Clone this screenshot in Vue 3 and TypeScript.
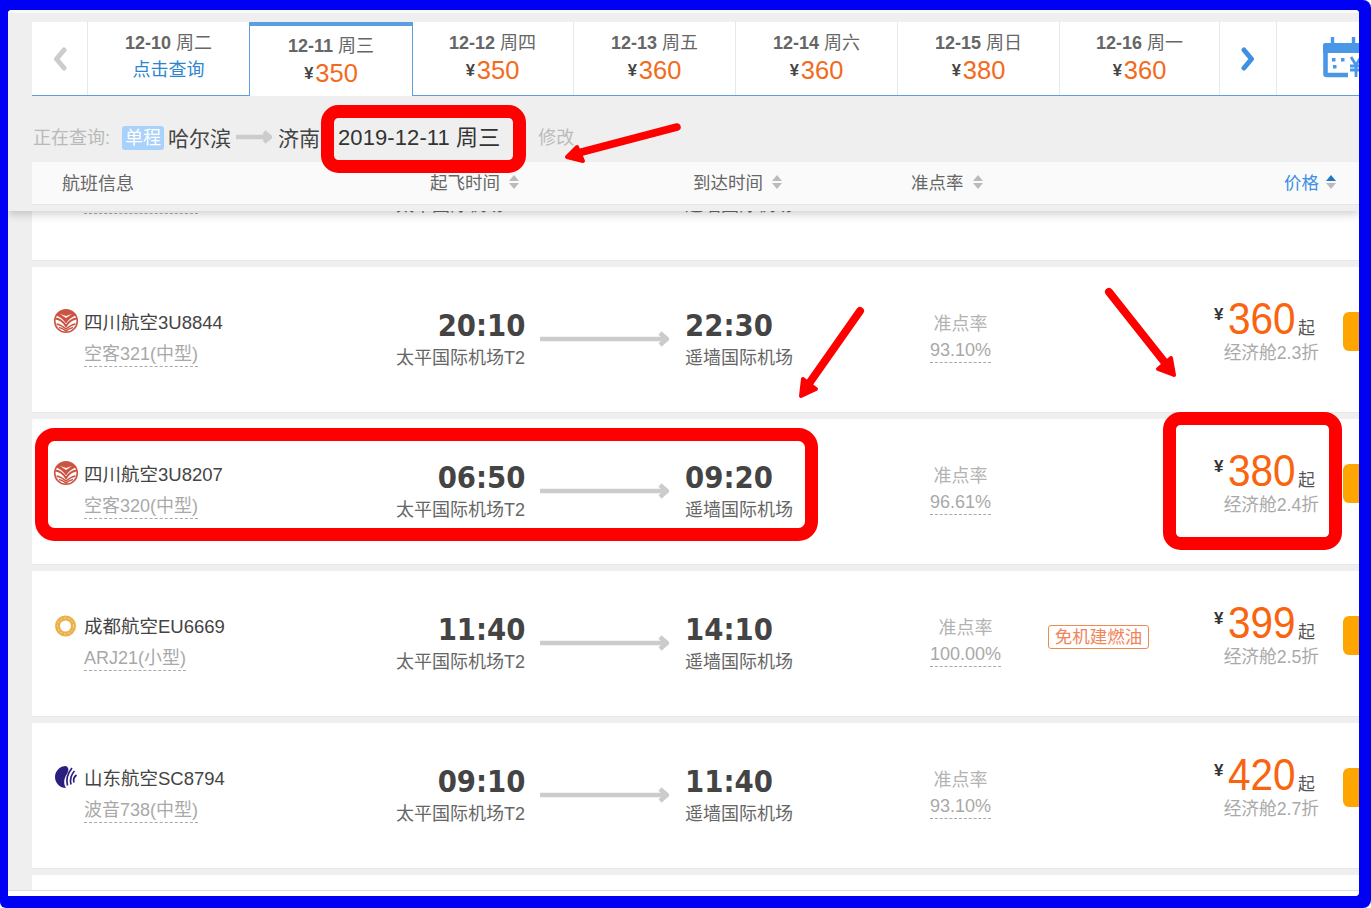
<script setup lang="ts">
interface Day { date: string; week: string; price?: string; active?: boolean }
interface Flight {
  airline: string; code: string; plane: string; logo: 'sc' | 'eu' | 'sd';
  dep: string; arr: string; rate: string; price: string; disc: string; tag?: string;
}
const days: Day[] = [
  { date: '12-10', week: '周二' },
  { date: '12-11', week: '周三', price: '350', active: true },
  { date: '12-12', week: '周四', price: '350' },
  { date: '12-13', week: '周五', price: '360' },
  { date: '12-14', week: '周六', price: '360' },
  { date: '12-15', week: '周日', price: '380' },
  { date: '12-16', week: '周一', price: '360' },
];
const flights: Flight[] = [
  { airline: '四川航空', code: '3U8844', plane: '空客321(中型)', logo: 'sc', dep: '20:10', arr: '22:30', rate: '93.10%', price: '360', disc: '2.3' },
  { airline: '四川航空', code: '3U8207', plane: '空客320(中型)', logo: 'sc', dep: '06:50', arr: '09:20', rate: '96.61%', price: '380', disc: '2.4' },
  { airline: '成都航空', code: 'EU6669', plane: 'ARJ21(小型)', logo: 'eu', dep: '11:40', arr: '14:10', rate: '100.00%', price: '399', disc: '2.5', tag: '免机建燃油' },
  { airline: '山东航空', code: 'SC8794', plane: '波音738(中型)', logo: 'sd', dep: '09:10', arr: '11:40', rate: '93.10%', price: '420', disc: '2.7' },
];
const heads = [
  { label: '起飞时间', cls: 'h-dep' },
  { label: '到达时间', cls: 'h-arr' },
  { label: '准点率', cls: 'h-rate' },
];
</script>

<template>
  <div class="frame">
    <div class="inner">
      <div class="top">
        <div class="dates">
          <div class="nav">
            <svg width="14" height="24" viewBox="0 0 14 24"><path d="M11 3 3.500 12 11 21" fill="none" stroke="#ccc" stroke-width="5" stroke-linejoin="round" stroke-linecap="round" /></svg>
          </div>
          <div v-for="d in days" :key="d.date" class="day" :class="{ active: d.active }">
            <div class="day-t"><b>{{ d.date }}</b> {{ d.week }}</div>
            <div v-if="d.price" class="day-p"><span class="y">¥</span><span class="n">{{ d.price }}</span></div>
            <div v-else class="day-q">点击查询</div>
          </div>
          <div class="nav">
            <svg width="14" height="24" viewBox="0 0 14 24"><path d="M3 3 10.500 12 3 21" fill="none" stroke="#3f8fe2" stroke-width="5" stroke-linejoin="round" stroke-linecap="round" /></svg>
          </div>
          <div class="cal">
            <svg width="44" height="42" viewBox="0 0 44 42">
              <path d="M9.500 0v8M30.500 0v8" stroke="#4a97e8" stroke-width="3.400" />
              <path d="M0 8a2 2 0 0 1 2-2h36a2 2 0 0 1 2 2v8H0z" fill="#4a97e8" />
              <path d="M2.500 14v23a1 1 0 0 0 1 1H25" fill="none" stroke="#4a97e8" stroke-width="4.600" />
              <path d="M9 21h3.500v3.500H9zM18 21h3.500v3.500H18zM10 28h3.500v3.500H10z" fill="#4a97e8" />
              <path d="M28 20l5 8 5-8M27 29h12M27 33h12M33 28v12" fill="none" stroke="#4a97e8" stroke-width="2.800" />
            </svg>
          </div>
        </div>
        <div class="query">
          <span class="q-label">正在查询:</span>
          <span class="badge">单程</span>
          <span class="city">哈尔滨</span>
          <svg class="q-arrow" width="36" height="14" viewBox="0 0 36 14"><path d="M0 7h33M28 2l6 5-6 5" fill="none" stroke="#ccc" stroke-width="4.400" /></svg>
          <span class="city">济南</span>
          <span class="q-date">2019-12-11 周三</span>
          <span class="q-edit">修改</span>
        </div>
        <div class="thead">
          <span class="h-info">航班信息</span>
          <span v-for="h in heads" :key="h.label" class="h-item" :class="h.cls">
            {{ h.label }}
            <i class="sort"><i class="up"></i><i class="down"></i></i>
          </span>
          <span class="h-item h-price">
            价格
            <i class="sort on"><i class="up"></i><i class="down"></i></i>
          </span>
        </div>
      </div>

      <div class="list">
        <div class="card partial">
          <div class="airline">
            <div class="name-row"></div>
            <span class="plane">空客320(中型)</span>
          </div>
          <div class="dep"><div class="time">&nbsp;</div><div class="port">太平国际机场T2</div></div>
          <div class="route"></div>
          <div class="arr"><div class="time">&nbsp;</div><div class="port">遥墙国际机场</div></div>
        </div>
        <div v-for="f in flights" :key="f.code" class="card">
          <div class="airline">
            <div class="name-row">
              <svg class="logo" width="26" height="26" viewBox="0 0 26 26">
                <template v-if="f.logo === 'sc'">
                  <circle cx="13" cy="13" r="11.300" fill="#fff" stroke="#cb5442" stroke-width="1.600" />
                  <path d="M3 7.500C7 9 10.500 11.500 13 15.500 15.500 11.500 19 9 23 7.500 21.500 4 17.500 2 13 2S4.500 4 3 7.500z" fill="#cb5442" />
                  <path d="M7 6l6 4 6-4-6 2z" fill="#fff" />
                  <path d="M2.500 10.500C7 11 10.500 14 13 18 15.500 14 19 11 23.500 10.500" fill="none" stroke="#cb5442" stroke-width="2.200" />
                  <path d="M3.500 16c3 .5 6 2 9.500 5 3.500-3 6.500-4.500 9.500-5M6 19.500c2 .3 4 1.200 7 3.500 3-2.300 5-3.200 7-3.500" fill="none" stroke="#cb5442" stroke-width="1.500" />
                </template>
                <template v-else-if="f.logo === 'eu'">
                  <circle cx="12.500" cy="14" r="8" fill="none" stroke="#ebb04a" stroke-width="5" />
                  <circle cx="12.500" cy="14" r="8" fill="none" stroke="#f7dba0" stroke-width="1" stroke-dasharray="2 2" />
                </template>
                <template v-else>
                  <path d="M13 2A11 11 0 1 0 13 24C10.500 20 10.500 15 14 10 16 6.500 16 3.500 13 2z" fill="#2b1f7d" />
                  <path d="M14.500 21.500C13 16 15 9 19 4M18 20.500C16.500 15.500 18.500 10 21.500 7M21 18.500C20 15.500 21.500 12.500 23.500 11" fill="none" stroke="#2b1f7d" stroke-width="1.700" />
                </template>
              </svg>
              <span class="fname">{{ f.airline }}{{ f.code }}</span>
            </div>
            <span class="plane">{{ f.plane }}</span>
          </div>
          <div class="dep">
            <div class="time"><span>{{ f.dep }}</span></div>
            <div class="port">太平国际机场T2</div>
          </div>
          <div class="route">
            <svg width="129" height="16" viewBox="0 0 129 16"><path d="M0 8h126M120 2l7 6-7 6" fill="none" stroke="#ccc" stroke-width="4.600" /></svg>
          </div>
          <div class="arr">
            <div class="time"><span>{{ f.arr }}</span></div>
            <div class="port">遥墙国际机场</div>
          </div>
          <div class="rate">
            <span class="rate-box">
              <span class="rate-l">准点率</span>
              <span class="rate-v">{{ f.rate }}</span>
            </span>
          </div>
          <div class="tagcol"><span v-if="f.tag" class="tag">{{ f.tag }}</span></div>
          <div class="price">
            <div class="price-main"><span class="py">¥</span><span class="pn">{{ f.price }}</span><span class="pq">起</span></div>
            <div class="disc">经济舱{{ f.disc }}折</div>
          </div>
          <div class="btn"></div>
        </div>
        <div class="card tail"></div>
      </div>
      <div class="foot"></div>

      <svg class="marks" width="1351" height="886" viewBox="8 10 1351 886">
        <g fill="none" stroke="#f00" stroke-width="13">
          <rect x="327.500" y="111.500" width="192" height="55" rx="11" />
          <rect x="41.500" y="434.500" width="770" height="100" rx="13" />
          <rect x="1169.500" y="418.500" width="166" height="125" rx="11" />
        </g>
        <g fill="none" stroke="#f00" stroke-linecap="round">
          <path d="M677 127 578 153" stroke-width="7.500" />
          <path d="M860 311 808 385" stroke-width="8" />
          <path d="M1109 292 1166 364" stroke-width="8" />
        </g>
        <g fill="#f00" stroke="#f00" stroke-width="4" stroke-linejoin="round">
          <path d="M567 157 577 147 583 161z" />
          <path d="M801 396 803 379 816 389z" />
          <path d="M1174 375 1171 358 1158 369z" />
        </g>
      </svg>
    </div>
  </div>
</template>

<style>
html, body { margin: 0; padding: 0; background: #fff; }
</style>

<style scoped>
* { box-sizing: border-box; }
.frame {
  width: 1371px; height: 908px; background: #0000f5;
  padding: 10px 12px 12px 8px; border-radius: 0 8px 8px 6px; overflow: hidden;
  font-family: "Liberation Sans", "Noto Sans CJK SC", sans-serif;
}
.inner { position: relative; width: 1351px; height: 886px; background: #efefef; overflow: hidden; border-radius: 4px 4px 4px 0; display: flex; flex-direction: column; }
.top { position: relative; z-index: 2; background: #efefef; height: 201px; padding: 9px 0 0 24px; border-top: 3px solid #fafafa; box-shadow: 0 3px 9px rgba(0,0,0,.2); flex: none; }
.dates { display: flex; height: 74px; background: #fff; border-bottom: 1px solid #5d9de2; }
.nav { width: 56px; display: flex; align-items: center; justify-content: center; border-right: 1px solid #e3e9ef; padding-top: 1px; }
.dates .nav:nth-last-child(2) { width: 57px; }
.day { width: 162px; border-right: 1px solid #e3e9ef; text-align: center; padding-top: 9px; color: #666; }
.day:nth-child(8) { width: 160px; }
.day.active { margin: 0 -1px -1px -1px; width: 164px; border: 1px solid #5d9de2; border-top: 4px solid #5d9de2; border-bottom: 0; background: #fff; padding-top: 8px; position: relative; z-index: 1; }
.day-t { font-size: 18px; line-height: 24px; height: 24px; }
.day-t b { font-weight: 700; }
.day-p { line-height: 30px; height: 30px; display: flex; justify-content: center; align-items: center; }
.y { font-size: 16.500px; font-weight: 700; color: #444; margin-right: 2px; }
.n { font-size: 25.500px; color: #f26b1d; }
.day-q { font-size: 18px; line-height: 30px; color: #2c86cf; }
.cal { flex: 1; padding: 15px 0 0 46px; overflow: hidden; }
.cal svg { display: block; }
.query { height: 66px; display: flex; align-items: center; padding: 16px 0 0 1px; }
.q-label { font-size: 18px; color: #b9b9b9; width: 89px; white-space: nowrap; margin-top: -2px; }
.badge { width: 42px; height: 24px; line-height: 24px; background: #a8d1fb; color: #fff; font-size: 18px; text-align: center; border-radius: 3px; margin: 2px 4px 0 0; }
.city { font-size: 21px; color: #444; white-space: nowrap; }
.q-arrow { margin: 0 6px 0 5px; }
.q-date { font-size: 22px; color: #333; margin: -4px 0 0 18px; white-space: nowrap; letter-spacing: .1px; }
.q-edit { font-size: 18px; color: #bbb; margin-left: 38px; margin-top: -2px; }
.thead { height: 43px; background: #fafafa; border-bottom: 1px solid #e6e6e6; display: flex; align-items: center; font-size: 18px; color: #666; padding-bottom: 3px; }
.h-info { margin-left: 30px; width: 368px; flex: none; }
.h-item { display: inline-flex; align-items: center; flex: none; white-space: nowrap; font-size: 17.500px; }
.h-dep { width: 263px; }
.h-arr { width: 218px; }
.h-rate { width: 373px; }
.h-price { color: #3c8fe3; }
.sort { display: inline-flex; flex-direction: column; gap: 2px; margin-left: 9px; }
.up, .down { display: block; width: 0; height: 0; border-left: 5.500px solid transparent; border-right: 5.500px solid transparent; }
.up { border-bottom: 6px solid #bbb; }
.down { border-top: 6px solid #bbb; }
.sort.on { margin-left: 7px; }
.sort.on .up { border-bottom-color: #2277c9; }
.list { flex: 1; min-height: 0; padding-left: 24px; display: flex; flex-direction: column; gap: 6px; overflow: hidden; }
.card { flex: none; width: 1327px; height: 146px; background: #fff; border-bottom: 1px solid #e8e8e8; display: flex; padding-left: 22px; }
.card.partial { margin-top: -97px; height: 147px; }
.card.tail { height: auto; flex: 1; border-bottom: 0; padding: 0; }
.foot { flex: none; height: 6px; background: #fff; border-top: 1px solid #d9dde3; }
.airline { width: 320px; flex: none; padding-top: 40px; }
.name-row { display: flex; align-items: center; height: 28px; }
.logo { flex: none; margin-right: 5px; margin-left: -1px; }
.fname { font-size: 18.500px; color: #444; white-space: nowrap; }
.plane { display: inline-block; margin: 7px 0 0 30px; font-size: 18px; line-height: 24px; color: #a9a9a9; border-bottom: 1px dashed #aaa; height: 25px; white-space: nowrap; }
.dep { width: 151px; flex: none; text-align: right; padding-top: 42px; }
.arr { width: 245px; flex: none; margin-left: 16px; padding-top: 42px; }
.time { font-family: "DejaVu Sans", sans-serif; font-weight: 700; font-size: 30px; line-height: 34px; color: #444; white-space: nowrap; }
.time span { display: inline-block; transform: scaleX(.92); }
.dep .time span { transform-origin: right center; }
.arr .time span { transform-origin: left center; }
.port { font-size: 18px; line-height: 24px; color: #666; white-space: nowrap; margin-top: 3px; }
.route { width: 129px; flex: none; margin-left: 15px; padding-top: 64px; }
.route svg { display: block; }
.rate { width: 118px; flex: none; padding-top: 45px; }
.rate-box { display: inline-flex; flex-direction: column; align-items: center; }
.rate-l { font-size: 18px; line-height: 24px; color: #b3b3b3; }
.rate-v { font-size: 18px; line-height: 22px; color: #a9a9a9; border-bottom: 1px dashed #aaa; margin-top: 3px; height: 24px; }
.tagcol { width: 166px; flex: none; padding-top: 54px; }
.tag { display: inline-block; height: 24px; line-height: 22px; width: 101px; text-align: center; border: 1px solid #ef8b4f; border-radius: 3px; font-size: 17.500px; color: #f0855a; white-space: nowrap; }
.price { width: 105px; flex: none; padding-top: 29px; }
.price-main { display: flex; align-items: flex-end; height: 46px; }
.py { align-self: flex-start; font-size: 17px; font-weight: 700; color: #333; line-height: 18px; margin-top: 10px; width: 14px; flex: none; }
.pn { font-size: 44px; line-height: 46px; color: #f9640f; width: 70px; white-space: nowrap; flex: none; display: inline-block; transform: scaleX(.92); transform-origin: left center; }
.pq { font-size: 17px; line-height: 20px; color: #555; margin-bottom: 3px; }
.disc { font-size: 17.700px; line-height: 24px; color: #a9a9a9; text-align: right; white-space: nowrap; margin-top: -1px; }
.btn { width: 40px; height: 39px; background: #ffa500; border-radius: 6px 0 0 6px; margin: 45px 0 0 24px; flex: none; }
.marks { position: absolute; left: 0; top: 0; z-index: 5; pointer-events: none; }
</style>
